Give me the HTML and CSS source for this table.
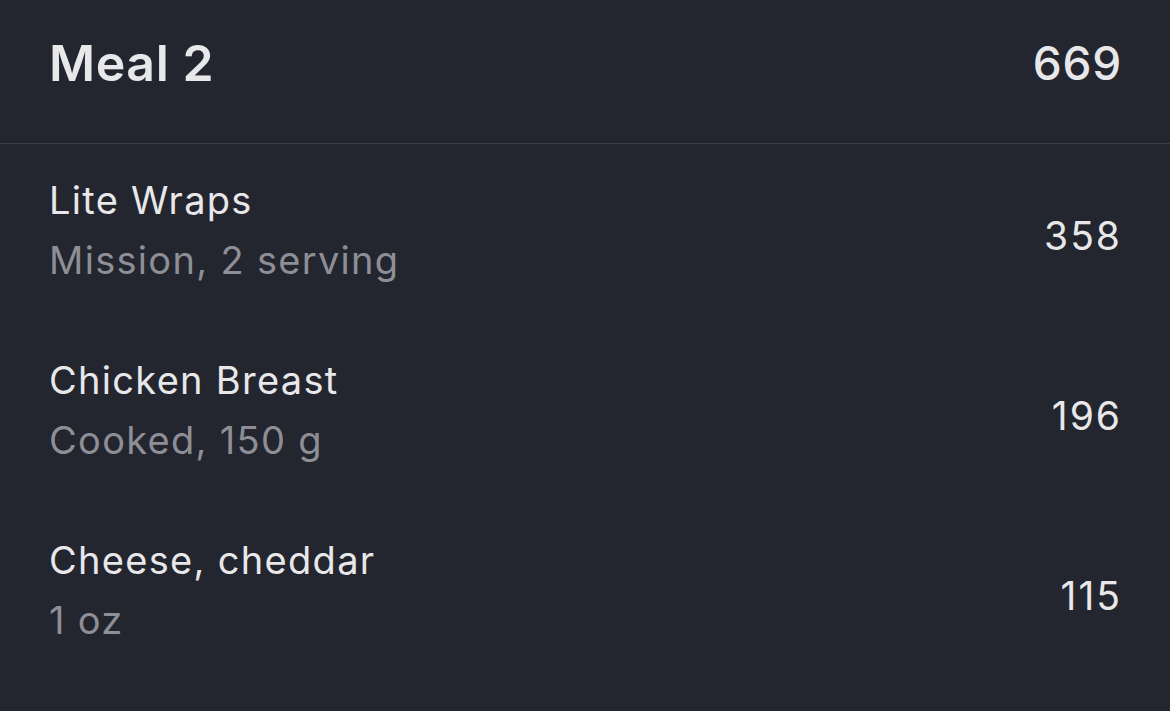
FILE: index.html
```html
<!DOCTYPE html>
<html lang="en">
<head>
  <meta charset="UTF-8" />
  <title>Meal 2</title>
  <link rel="stylesheet" href="styles.css">
</head>
<body>
  <section class="meal">
    <!-- MEAL HEADER -->
    <header class="meal-header">
      <h1 class="meal-title">Meal 2</h1>
      <span class="meal-total">669</span>
    </header>

    <!-- FOOD ITEMS -->
    <ul class="food-list">
      <li class="food-item">
        <div class="food-info">
          <div class="food-name">Lite Wraps</div>
          <div class="food-detail">Mission, 2 serving</div>
        </div>
        <span class="food-cal">358</span>
      </li>
      <li class="food-item">
        <div class="food-info">
          <div class="food-name">Chicken Breast</div>
          <div class="food-detail">Cooked, 150 g</div>
        </div>
        <span class="food-cal">196</span>
      </li>
      <li class="food-item">
        <div class="food-info">
          <div class="food-name">Cheese, cheddar</div>
          <div class="food-detail">1 oz</div>
        </div>
        <span class="food-cal">115</span>
      </li>
    </ul>
  </section>
</body>
</html>
```

FILE: styles.css
```css
:root {
  --bg-color: #23252f;
  --text-color: #e8e8ea;
  --muted-color: #8e8f96;
  --line-color: #3b3d47;
  --font-family: Inter, "Noto Sans", sans-serif;
}
* {
  margin: 0;
  padding: 0;
  box-sizing: border-box;
  font-family: var(--font-family);
}
body {
  background: var(--bg-color);
  color: var(--text-color);
}

/* Header */
.meal-header {
  display: flex;
  justify-content: space-between;
  align-items: center;
  height: 144px;
  padding: 0 48px 18px 49px;
  border-bottom: 1px solid var(--line-color);
}
.meal-title {
  font-size: 50px;
  font-weight: 600;
  letter-spacing: 0.6px;
}
.meal-total {
  font-size: 46px;
  font-weight: 500;
  letter-spacing: 0.8px;
}

/* Food rows */
.food-list {
  list-style: none;
}
.food-item {
  display: flex;
  justify-content: space-between;
  align-items: center;
  height: 180px;
  padding: 0 48px 8px 49px;
}
.food-name,
.food-detail {
  font-size: 38px;
  line-height: 60px;
  letter-spacing: 1.3px;
}
.food-detail {
  color: var(--muted-color);
}
.food-cal {
  font-size: 39px;
  letter-spacing: 2px;
  padding-top: 10px;
}
```
